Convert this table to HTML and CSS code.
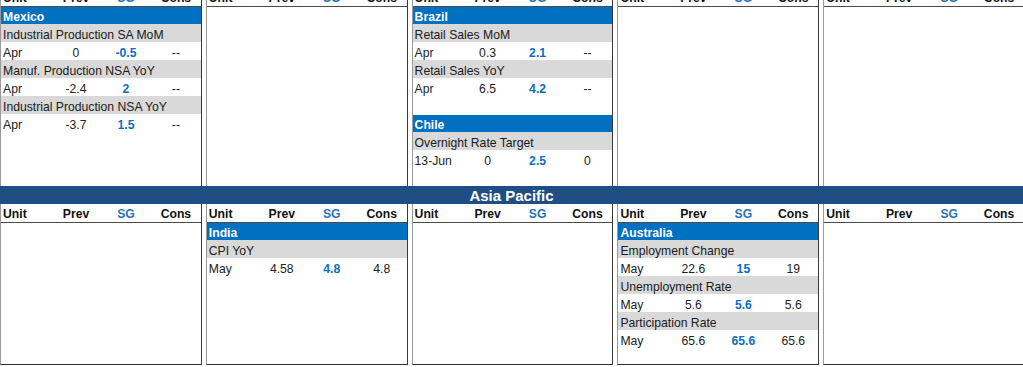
FILE: index.html
```html
<!DOCTYPE html>
<html lang="en">
<head>
<meta charset="utf-8">
<title>Economic Calendar</title>
<link rel="stylesheet" href="styles.css">
</head>
<body>
<div class="sheet">
  <section class="region region-top">
    <div class="col">
      <div class="row hdr"><span class="c-unit">Unit</span><span class="c">Prev</span><span class="c sg">SG</span><span class="c">Cons</span></div>
      <div class="row country">Mexico</div>
      <div class="row label">Industrial Production SA MoM</div>
      <div class="row data"><span class="c-unit">Apr</span><span class="c">0</span><span class="c sg">-0.5</span><span class="c">--</span></div>
      <div class="row label">Manuf. Production NSA YoY</div>
      <div class="row data"><span class="c-unit">Apr</span><span class="c">-2.4</span><span class="c sg">2</span><span class="c">--</span></div>
      <div class="row label">Industrial Production NSA YoY</div>
      <div class="row data"><span class="c-unit">Apr</span><span class="c">-3.7</span><span class="c sg">1.5</span><span class="c">--</span></div>
    </div>
    <div class="col">
      <div class="row hdr"><span class="c-unit">Unit</span><span class="c">Prev</span><span class="c sg">SG</span><span class="c">Cons</span></div>
    </div>
    <div class="col">
      <div class="row hdr"><span class="c-unit">Unit</span><span class="c">Prev</span><span class="c sg">SG</span><span class="c">Cons</span></div>
      <div class="row country">Brazil</div>
      <div class="row label">Retail Sales MoM</div>
      <div class="row data"><span class="c-unit">Apr</span><span class="c">0.3</span><span class="c sg">2.1</span><span class="c">--</span></div>
      <div class="row label">Retail Sales YoY</div>
      <div class="row data"><span class="c-unit">Apr</span><span class="c">6.5</span><span class="c sg">4.2</span><span class="c">--</span></div>
      <div class="spacer"></div>
      <div class="row country">Chile</div>
      <div class="row label">Overnight Rate Target</div>
      <div class="row data"><span class="c-unit">13-Jun</span><span class="c">0</span><span class="c sg">2.5</span><span class="c">0</span></div>
    </div>
    <div class="col">
      <div class="row hdr"><span class="c-unit">Unit</span><span class="c">Prev</span><span class="c sg">SG</span><span class="c">Cons</span></div>
    </div>
    <div class="col">
      <div class="row hdr"><span class="c-unit">Unit</span><span class="c">Prev</span><span class="c sg">SG</span><span class="c">Cons</span></div>
    </div>
  </section>

  <div class="region-title">Asia Pacific</div>

  <section class="region region-bottom">
    <div class="col">
      <div class="row hdr"><span class="c-unit">Unit</span><span class="c">Prev</span><span class="c sg">SG</span><span class="c">Cons</span></div>
    </div>
    <div class="col">
      <div class="row hdr"><span class="c-unit">Unit</span><span class="c">Prev</span><span class="c sg">SG</span><span class="c">Cons</span></div>
      <div class="row country">India</div>
      <div class="row label">CPI YoY</div>
      <div class="row data"><span class="c-unit">May</span><span class="c">4.58</span><span class="c sg">4.8</span><span class="c">4.8</span></div>
    </div>
    <div class="col">
      <div class="row hdr"><span class="c-unit">Unit</span><span class="c">Prev</span><span class="c sg">SG</span><span class="c">Cons</span></div>
    </div>
    <div class="col">
      <div class="row hdr"><span class="c-unit">Unit</span><span class="c">Prev</span><span class="c sg">SG</span><span class="c">Cons</span></div>
      <div class="row country">Australia</div>
      <div class="row label">Employment Change</div>
      <div class="row data"><span class="c-unit">May</span><span class="c">22.6</span><span class="c sg">15</span><span class="c">19</span></div>
      <div class="row label">Unemployment Rate</div>
      <div class="row data"><span class="c-unit">May</span><span class="c">5.6</span><span class="c sg">5.6</span><span class="c">5.6</span></div>
      <div class="row label">Participation Rate</div>
      <div class="row data"><span class="c-unit">May</span><span class="c">65.6</span><span class="c sg">65.6</span><span class="c">65.6</span></div>
    </div>
    <div class="col">
      <div class="row hdr"><span class="c-unit">Unit</span><span class="c">Prev</span><span class="c sg">SG</span><span class="c">Cons</span></div>
    </div>
  </section>
</div>
</body>
</html>
```

FILE: styles.css
```css
html, body {
  margin: 0;
  padding: 0;
  background: #ffffff;
}

body {
  overflow: hidden;
  font-family: "Liberation Sans", Arial, sans-serif;
  font-size: 12.2px;
  color: #1a1a1a;
}

.sheet {
  width: 1025px;
  margin-top: -12px;
}

.region {
  display: grid;
  grid-template-columns: repeat(5, 1fr);
  column-gap: 4px;
}

.region-top {
  height: 198px;
}

.region-bottom {
  height: 161px;
}

.col {
  min-width: 0;
  border-left: 1px solid #9a9a9a;
  border-right: 1px solid #3a3a3a;
}

.region-bottom .col {
  border-bottom: 1px solid #2e2e2e;
  box-sizing: border-box;
}

.row {
  height: 18px;
  box-sizing: border-box;
  padding-top: 5px;
  line-height: 13px;
  white-space: nowrap;
  overflow: visible;
}

.hdr,
.data {
  display: grid;
  grid-template-columns: 50px 50px 50px 1fr;
}

.hdr {
  height: 19px;
  padding-top: 4px;
  font-weight: bold;
  color: #111;
  border-bottom: 1px solid #4a4a4a;
}

.hdr .sg {
  color: #2a72b8;
}

.country {
  height: 17px;
  padding-top: 4px;
  padding-left: 2px;
  background: #0070c0;
  color: #ffffff;
  font-weight: bold;
}

.label {
  padding-left: 2px;
  background: #d9d9d9;
  color: #1a1a1a;
}

.data {
  color: #222;
}

.c-unit {
  padding-left: 2px;
  text-align: left;
}

.c {
  text-align: center;
}

.sg {
  color: #0a6fc0;
  font-weight: bold;
}

.spacer {
  height: 19px;
}

.region-title {
  width: 1023px;
  height: 18px;
  box-sizing: border-box;
  padding-top: 1px;
  line-height: 17px;
  background: #1f4e85;
  color: #ffffff;
  font-size: 15px;
  font-weight: bold;
  text-align: center;
}
```
